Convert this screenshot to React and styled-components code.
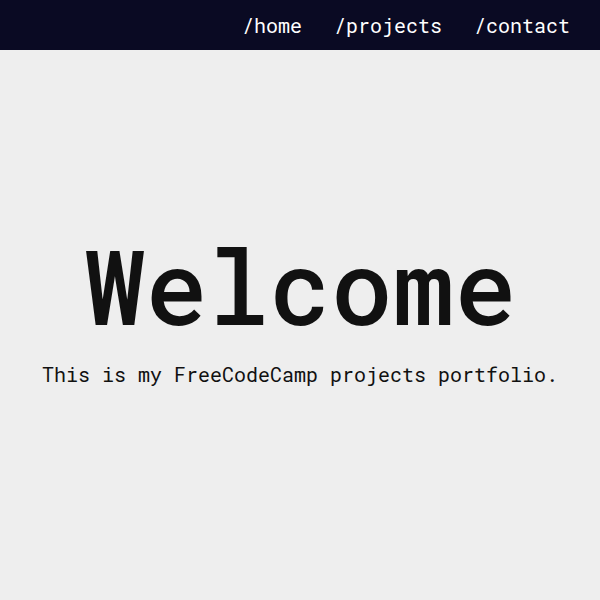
import styled, { createGlobalStyle } from "styled-components";

const GlobalStyle = createGlobalStyle`
  html, body {
    margin: 0;
    padding: 0;
    background: #eeeeee;
    font-family: "Roboto Mono", "DejaVu Sans Mono", "Liberation Mono", monospace;
  }
`

const Nav = styled.nav`
  display: flex;
  justify-content: flex-end;
  align-items: center;
  height: 50px;
  padding-right: 30px;
  gap: 32px;
  background-color: #0a0a23;
`

const NavLink = styled.a`
  color: #ffffff;
  font-size: 20px;
  text-decoration: none;
`

const Welcome = styled.section`
  display: flex;
  flex-direction: column;
  align-items: center;
  justify-content: center;
  height: 520px;
  color: #111111;
`

const Title = styled.h1`
  margin: 0;
  font-size: 103px;
  font-weight: 500;
  line-height: 1;
`

const Subtitle = styled.p`
  margin: 24px 0 0;
  font-size: 20px;
`

export default function App(){
  return(
    <>
      <GlobalStyle />
      <Nav>
        <NavLink href="#welcome-section">/home</NavLink>
        <NavLink href="#projects">/projects</NavLink>
        <NavLink href="#contact">/contact</NavLink>
      </Nav>
      <Welcome id="welcome-section">
        <Title>Welcome</Title>
        <Subtitle>This is my FreeCodeCamp projects portfolio.</Subtitle>
      </Welcome>
    </>
  )
}
